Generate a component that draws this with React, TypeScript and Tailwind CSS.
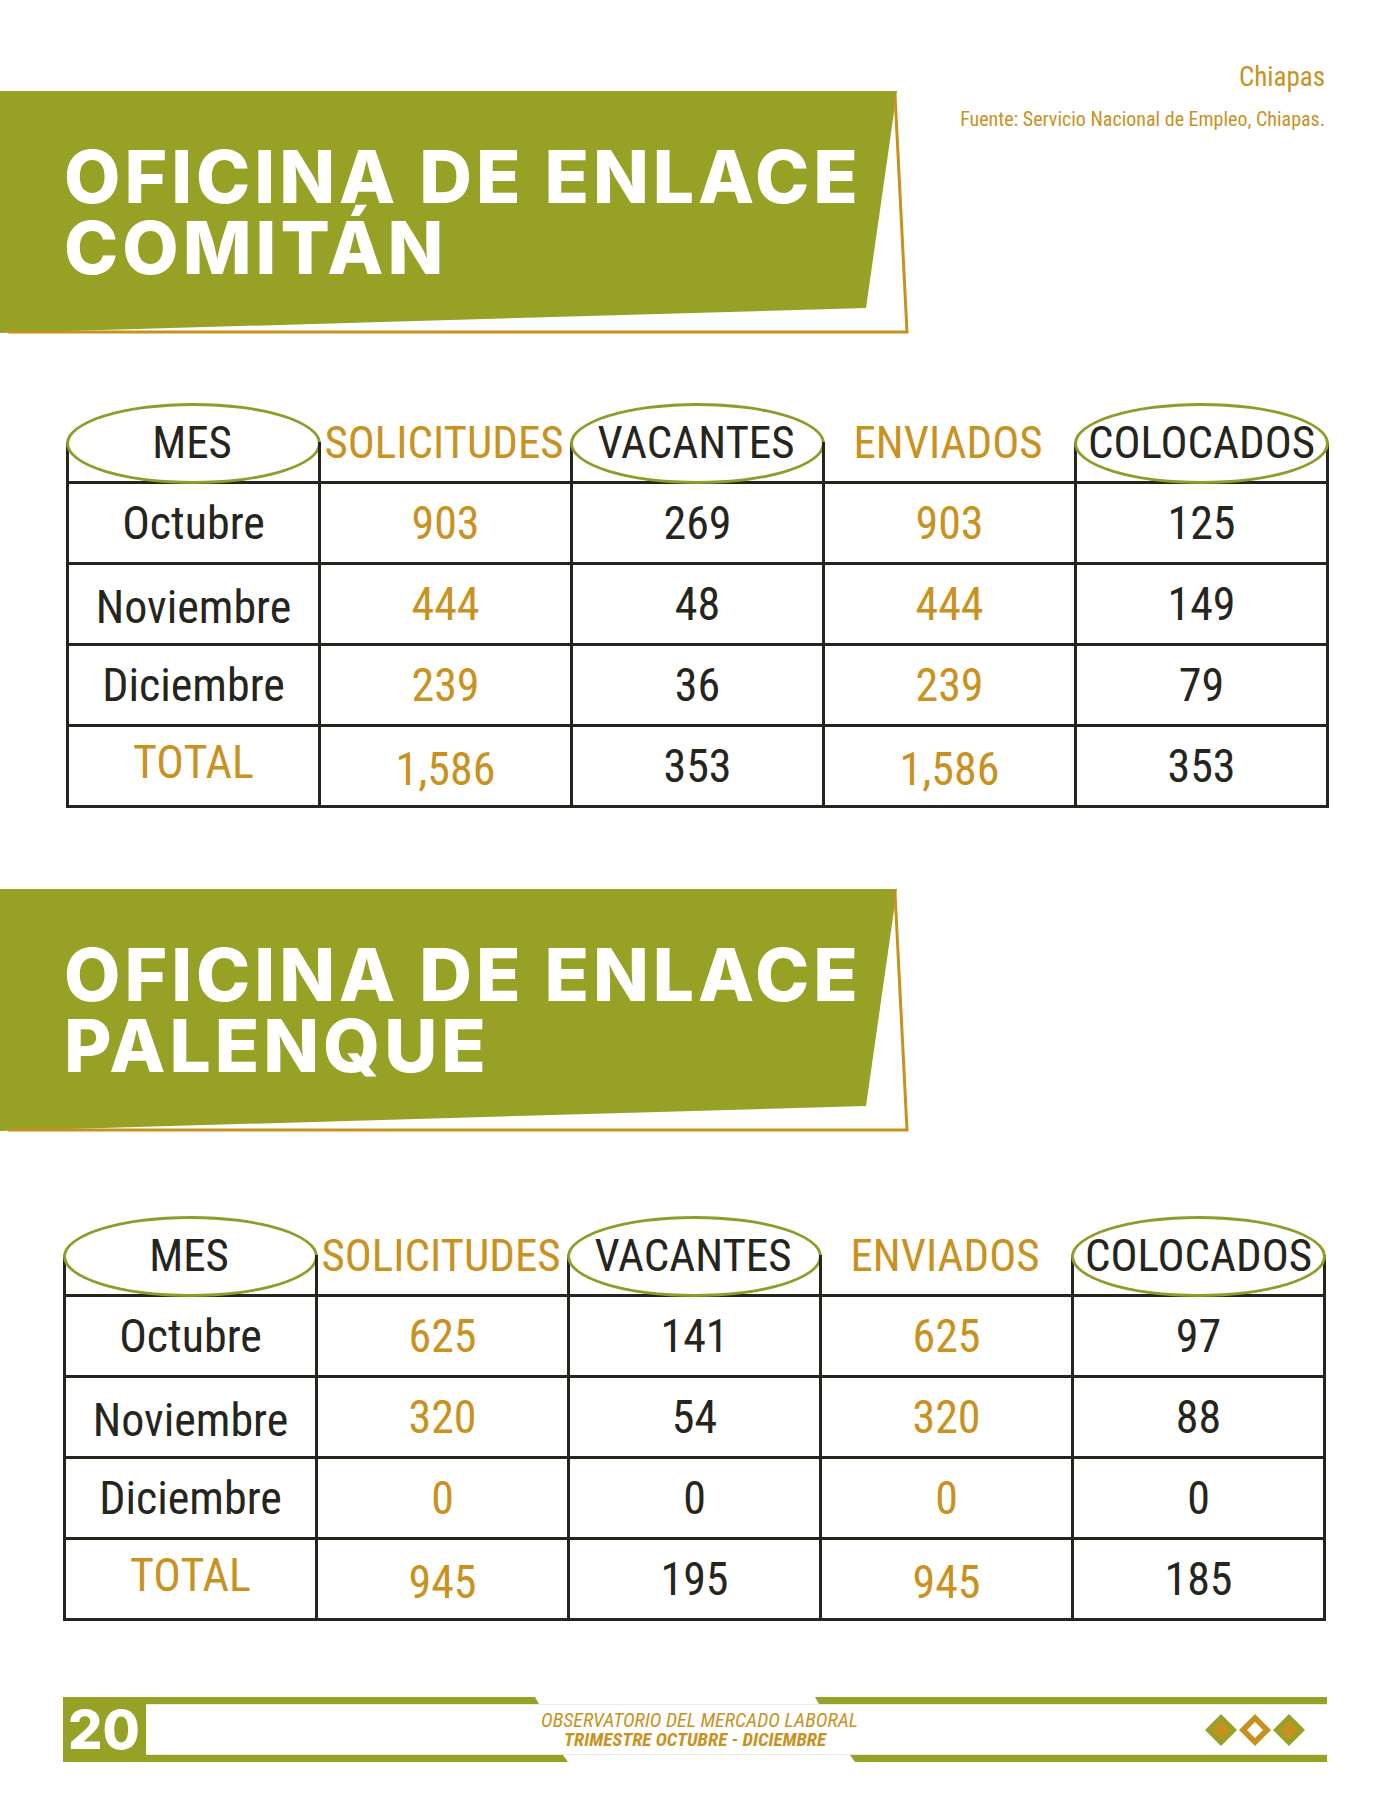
const GREEN = '#97a126';

const narrow = "[font-family:'Roboto_Condensed',Roboto,sans-serif] [font-stretch:75%]";
const heavy = "[font-family:Inter,'Open_Sans',sans-serif]";

type Row = { mes: string; sol: string; vac: string; env: string; col: string };

const comitan: Row[] = [
  { mes: 'Octubre', sol: '903', vac: '269', env: '903', col: '125' },
  { mes: 'Noviembre', sol: '444', vac: '48', env: '444', col: '149' },
  { mes: 'Diciembre', sol: '239', vac: '36', env: '239', col: '79' },
  { mes: 'TOTAL', sol: '1,586', vac: '353', env: '1,586', col: '353' },
];

const palenque: Row[] = [
  { mes: 'Octubre', sol: '625', vac: '141', env: '625', col: '97' },
  { mes: 'Noviembre', sol: '320', vac: '54', env: '320', col: '88' },
  { mes: 'Diciembre', sol: '0', vac: '0', env: '0', col: '0' },
  { mes: 'TOTAL', sol: '945', vac: '195', env: '945', col: '185' },
];

const headers = [
  { label: 'MES', gold: false, oval: true },
  { label: 'SOLICITUDES', gold: true, oval: false },
  { label: 'VACANTES', gold: false, oval: true },
  { label: 'ENVIADOS', gold: true, oval: false },
  { label: 'COLOCADOS', gold: false, oval: true },
];

const Banner = ({ lines }: { lines: string[] }) => (
  <div className="relative w-[910px] h-[243px]">
    <div className="h-[242px] w-[897px] bg-[#97a126] [clip-path:polygon(0_0,897px_0,866px_217px,0_242px)] pl-[64px] pt-[50px]">
      {lines.map((l) => (
        <div key={l} className={`${heavy} text-white font-extrabold text-[73px] leading-[71px] tracking-[4px] whitespace-nowrap`}>
          {l}
        </div>
      ))}
    </div>
    <svg className="absolute inset-0" width="910" height="243" viewBox="0 0 910 243">
      <polyline points="895,4 907,241 8,241" fill="none" stroke="#c8911f" strokeWidth="3" />
    </svg>
  </div>
);

const Cell = ({ children, gold, last }: { children: React.ReactNode; gold: boolean; last?: boolean }) => (
  <div
    className={`h-[78px] flex items-center justify-center border-l-[3px] border-[#26251d] ${last ? 'border-r-[3px]' : ''} ${
      gold ? 'text-[#c9921f]' : 'text-[#26251d]'
    }`}
  >
    {children}
  </div>
);

const DataTable = ({ rows, shift }: { rows: Row[]; shift: string }) => (
  <div className={`${shift} w-[1263px] ${narrow}`}>
    <div className="grid grid-cols-[252px_252px_252px_252px_255px] h-[81px] border-b-[3px] border-[#26251d]">
      {headers.map((h, i) => (
        <div key={h.label} className="relative flex items-center justify-center">
          <span className="absolute left-0 top-1/2 bottom-0 w-[3px] bg-[#26251d]" />
          {i === 4 && <span className="absolute right-0 top-1/2 bottom-0 w-[3px] bg-[#26251d]" />}
          {h.oval && (
            <span className="absolute left-0 top-0 w-[255px] h-[81px] rounded-[50%] border-[3px] border-[#8e9c2a]" />
          )}
          <span className={`relative text-[45px] leading-none whitespace-nowrap ${h.gold ? 'text-[#c9921f]' : 'text-[#26251d]'}`}>
            {h.label}
          </span>
        </div>
      ))}
    </div>
    {rows.map((r) => (
      <div key={r.mes} className="grid grid-cols-[252px_252px_252px_252px_255px] border-b-[3px] border-[#26251d] text-[46px] leading-none">
        <Cell gold={r.mes === 'TOTAL'}>
          <span className={r.mes === 'TOTAL' ? '-mt-[8px]' : r.mes === 'Noviembre' ? 'mt-[6px]' : ''}>{r.mes}</span>
        </Cell>
        <Cell gold>
          <span className={r.mes === 'TOTAL' ? 'mt-[6px]' : ''}>{r.sol}</span>
        </Cell>
        <Cell gold={false}>{r.vac}</Cell>
        <Cell gold>
          <span className={r.mes === 'TOTAL' ? 'mt-[6px]' : ''}>{r.env}</span>
        </Cell>
        <Cell gold={false} last>
          {r.col}
        </Cell>
      </div>
    ))}
  </div>
);

const Diamonds = () => (
  <svg width="102" height="34" viewBox="0 0 102 34">
    <polygon points="17,1 33,17 17,33 1,17" fill={GREEN} />
    <polygon points="17,8 26,17 17,26 8,17" fill="#c8911f" />
    <polygon points="51,1 67,17 51,33 35,17" fill="#c8911f" />
    <polygon points="51,9 59,17 51,25 43,17" fill="#ffffff" />
    <polygon points="85,1 101,17 85,33 69,17" fill={GREEN} />
    <polygon points="85,8 94,17 85,26 76,17" fill="#c8911f" />
  </svg>
);

const Footer = () => (
  <div className="ml-[63px] w-[1264px] h-[65px] flex">
    <div className="w-[83px] h-full bg-[#97a126] flex items-center pl-[5px]">
      <span className={`${heavy} text-white font-extrabold text-[54px] leading-none`}>20</span>
    </div>
    <div className="flex-1 flex flex-col">
      <div className="flex h-[7px]">
        <div className="w-[393px] bg-[#97a126] [clip-path:polygon(0_0,calc(100%-4px)_0,100%_100%,0_100%)]" />
        <div className="ml-auto w-[512px] bg-[#97a126] [clip-path:polygon(0_0,100%_0,100%_100%,4px_100%)]" />
      </div>
      <div className="h-px bg-[#ecebd9] mr-[0px]" />
      <div className="flex-1 flex items-center">
        <div className={`${narrow} italic text-[#c9921f] text-[20px] leading-[19px] ml-[395px] w-[308px] text-center`}>
          <div className="whitespace-nowrap">OBSERVATORIO DEL MERCADO LABORAL</div>
          <div className="whitespace-nowrap font-bold text-[19px]">TRIMESTRE OCTUBRE - DICIEMBRE</div>
        </div>
        <div className="ml-auto mr-[21px]">
          <Diamonds />
        </div>
      </div>
      <div className="h-px bg-[#ecebd9]" />
      <div className="flex h-[7px]">
        <div className="w-[422px] bg-[#97a126] [clip-path:polygon(0_0,calc(100%-5px)_0,100%_100%,0_100%)]" />
        <div className="ml-auto w-[477px] bg-[#97a126] [clip-path:polygon(0_0,100%_0,100%_100%,5px_100%)]" />
      </div>
    </div>
  </div>
);

export default function App() {
  return (
    <div className="w-[1390px] h-[1800px] bg-white flex flex-col overflow-hidden">
      <div className="flex">
        <div className="mt-[91px]">
          <Banner lines={['OFICINA DE ENLACE', 'COMITÁN']} />
        </div>
        <div className={`flex-1 flex flex-col items-end pr-[65px] pt-[62px] text-[#c9921f] ${narrow}`}>
          <div className="text-[27px] leading-[30px]">Chiapas</div>
          <div className="text-[20px] leading-[24px] mt-[15px] whitespace-nowrap">Fuente: Servicio Nacional de Empleo, Chiapas.</div>
        </div>
      </div>

      <div className="mt-[69px]">
        <DataTable rows={comitan} shift="ml-[66px]" />
      </div>

      <div className="mt-[81px]">
        <Banner lines={['OFICINA DE ENLACE', 'PALENQUE']} />
      </div>

      <div className="mt-[84px]">
        <DataTable rows={palenque} shift="ml-[63px]" />
      </div>

      <div className="mt-[76px]">
        <Footer />
      </div>
    </div>
  );
}
